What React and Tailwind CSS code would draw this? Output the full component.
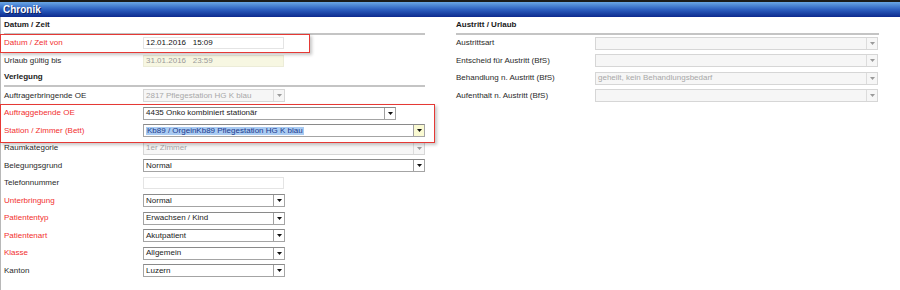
import React from "react";

function Arrow({ disabled, yellow }) {
  return (
    <div
      className={`flex w-[11px] shrink-0 items-center justify-center border-l ${
        disabled ? "border-[#dcdcdc]" : "border-[#a0a0a0]"
      } ${yellow ? "bg-[#fafad2]" : ""}`}
    >
      <svg width="5" height="3" viewBox="0 0 5 3">
        <polygon points="0,0 5,0 2.5,3" fill={disabled ? "#9a9a9a" : "#111"} />
      </svg>
    </div>
  );
}

function Select({ value, w, disabled, highlight, yellow }) {
  return (
    <div
      className={`flex h-[13px] ${w} border ${
        disabled
          ? "border-[#d6d6d6] bg-[#f6f6f6] text-[#a8a8a8]"
          : "border-[#a4a4a4] border-t-[#8a8a8a] bg-white text-[#1a1a1a]"
      }`}
    >
      <div className="flex min-w-0 flex-1 items-center overflow-hidden whitespace-nowrap pl-[2px] leading-none">
        {highlight ? (
          <span className="bg-[#a9cbf2] px-[1px] text-[#1d3a8c]">{value}</span>
        ) : (
          value
        )}
      </div>
      <Arrow disabled={disabled} yellow={yellow} />
    </div>
  );
}

function Input({ value, yellow }) {
  return (
    <div
      className={`flex h-[12px] w-[141px] items-center whitespace-pre border pl-[2px] leading-none ${
        yellow
          ? "border-[#ececd8] bg-[#f7f7e2] text-[#9a9a9a]"
          : "border-[#e4e4e4] bg-white text-[#111]"
      }`}
    >
      {value}
    </div>
  );
}

function Row({ label, red, children }) {
  return (
    <div className="flex h-[17.5px] items-center">
      <div className={`w-[139px] shrink-0 ${red ? "text-[#f2302f]" : "text-[#2a2a2a]"}`}>
        {label}
      </div>
      {children}
    </div>
  );
}

function Section({ title }) {
  return (
    <div className="flex h-[17.5px] items-center border-b-2 border-[#c4c4c4] font-bold text-[#1a1a1a]">
      {title}
    </div>
  );
}

export default function App() {
  return (
    <div
      className="relative h-[290px] w-[900px] overflow-hidden bg-white text-[8px]"
      style={{ fontFamily: "'Liberation Sans', Arial, sans-serif" }}
    >
      {/* title bar */}
      <div className="flex h-[17px] items-center border-t-2 border-[#1b1b1b] bg-gradient-to-b from-[#6aa6e6] via-[#2d5fc0] to-[#0e2a8e] pl-[3px] text-[10px] font-bold text-white [text-shadow:1px_1px_0_#0b1f60]">
        Chronik
      </div>

      <div className="flex h-[273px] border-l border-[#b8b8b8]">
        {/* left column */}
        <div className="w-[424px] shrink-0 pl-[3px]">
          <Section title="Datum / Zeit" />
          <Row label="Datum / Zeit von" red>
            <Input value="12.01.2016   15:09" />
          </Row>
          <Row label="Urlaub gültig bis">
            <Input value="31.01.2016   23:59" yellow />
          </Row>
          <Section title="Verlegung" />
          <Row label="Auftragerbringende OE">
            <Select w="w-[142px]" value="2817 Pflegestation HG K blau" disabled />
          </Row>
          <Row label="Auftraggebende OE" red>
            <Select w="w-[253px]" value="4435 Onko kombiniert stationär" />
          </Row>
          <Row label="Station / Zimmer (Bett)" red>
            <Select w="w-[282px]" value="Kb89 / OrgeinKb89 Pflegestation HG K blau" highlight yellow />
          </Row>
          <Row label="Raumkategorie">
            <Select w="w-[282px]" value="1er Zimmer" disabled />
          </Row>
          <Row label="Belegungsgrund">
            <Select w="w-[282px]" value="Normal" />
          </Row>
          <Row label="Telefonnummer">
            <Input value="" />
          </Row>
          <Row label="Unterbringung" red>
            <Select w="w-[142px]" value="Normal" />
          </Row>
          <Row label="Patiententyp" red>
            <Select w="w-[142px]" value="Erwachsen / Kind" />
          </Row>
          <Row label="Patientenart" red>
            <Select w="w-[142px]" value="Akutpatient" />
          </Row>
          <Row label="Klasse" red>
            <Select w="w-[142px]" value="Allgemein" />
          </Row>
          <Row label="Kanton">
            <Select w="w-[142px]" value="Luzern" />
          </Row>
        </div>

        {/* right column */}
        <div className="ml-[31px] w-[423px] shrink-0">
          <Section title="Austritt / Urlaub" />
          <Row label="Austrittsart">
            <Select w="w-[283px]" value="" disabled />
          </Row>
          <Row label="Entscheid für Austritt (BfS)">
            <Select w="w-[283px]" value="" disabled />
          </Row>
          <Row label="Behandlung n. Austritt (BfS)">
            <Select w="w-[283px]" value="geheilt, kein Behandlungsbedarf" disabled />
          </Row>
          <Row label="Aufenthalt n. Austritt (BfS)">
            <Select w="w-[283px]" value="" disabled />
          </Row>
        </div>
      </div>

      {/* annotation boxes */}
      <div className="absolute left-0 top-[34px] z-10 h-[19px] w-[310px] border border-[#e53935] shadow-[2px_2px_3px_rgba(0,0,0,0.22)]" />
      <div className="absolute left-0 top-[104px] z-10 h-[39px] w-[435px] border border-[#e53935] shadow-[2px_2px_3px_rgba(0,0,0,0.22)]" />
    </div>
  );
}
